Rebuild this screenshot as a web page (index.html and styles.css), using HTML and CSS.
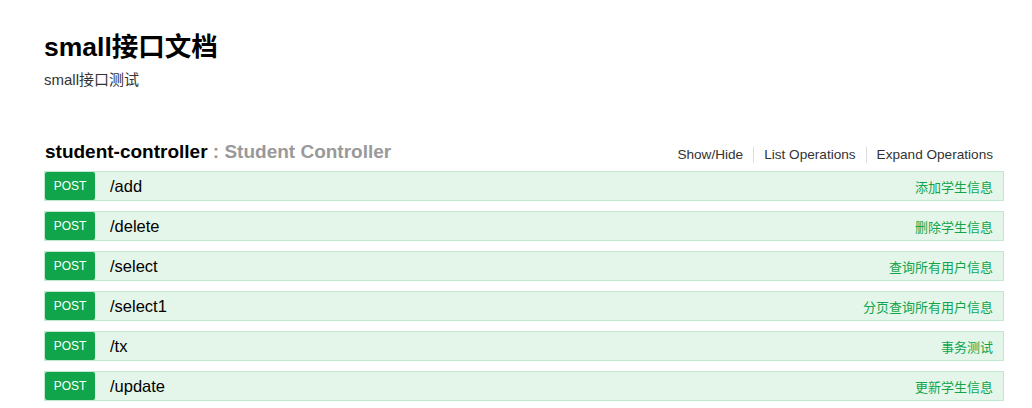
FILE: index.html
```html
<!DOCTYPE html>
<html>
<head>
<meta charset="utf-8">
<link rel="stylesheet" href="styles.css">
</head>
<body>
<div class="page">
  <div class="info">
    <h1 class="title">small接口文档</h1>
    <div class="desc">small接口测试</div>
  </div>
  <div class="resource">
    <div class="heading">
      <h2 class="name">student-controller <span class="sub">: Student Controller</span></h2>
      <ul class="options">
        <li>Show/Hide</li>
        <li>List Operations</li>
        <li>Expand Operations</li>
      </ul>
    </div>
    <ul class="ops">
      <li class="op"><span class="method">POST</span><span class="path">/add</span><span class="summary">添加学生信息</span></li>
      <li class="op"><span class="method">POST</span><span class="path">/delete</span><span class="summary">删除学生信息</span></li>
      <li class="op"><span class="method">POST</span><span class="path">/select</span><span class="summary">查询所有用户信息</span></li>
      <li class="op"><span class="method">POST</span><span class="path">/select1</span><span class="summary">分页查询所有用户信息</span></li>
      <li class="op"><span class="method">POST</span><span class="path">/tx</span><span class="summary">事务测试</span></li>
      <li class="op"><span class="method">POST</span><span class="path">/update</span><span class="summary">更新学生信息</span></li>
    </ul>
  </div>
</div>
</body>
</html>
```

FILE: styles.css
```css
html, body {
  margin: 0;
  padding: 0;
  background: #fff;
}
body {
  font-family: "Liberation Sans", "Noto Sans CJK SC", sans-serif;
  color: #000;
}
.page {
  padding: 30px 28px 0 44px;
}
.title {
  margin: 0;
  font-size: 26.5px;
  font-weight: bold;
  line-height: 34px;
}
.desc {
  margin-top: 6px;
  font-size: 15px;
  line-height: 20px;
  color: #333;
}
.resource {
  margin-top: 48px;
}
.heading {
  display: flex;
  align-items: center;
  justify-content: space-between;
  height: 28px;
  margin-bottom: 5px;
}
.name {
  margin: 0;
  font-size: 19px;
  font-weight: bold;
  line-height: 24px;
  padding-left: 1px;
}
.sub {
  color: #999;
}
.options {
  list-style: none;
  margin: 6px 0 0 0;
  padding: 0 11px 0 0;
  display: flex;
  font-size: 13.6px;
  color: #333;
}
.options li {
  padding: 0 10px;
  border-left: 1px solid #ddd;
  line-height: 16px;
}
.options li:first-child {
  border-left: none;
}
.options li:last-child {
  padding-right: 0;
}
.ops {
  list-style: none;
  margin: 0;
  padding: 0;
}
.op {
  display: flex;
  align-items: center;
  height: 28px;
  background: #e4f6ea;
  border: 1px solid #c3e8d1;
  margin-bottom: 10px;
}
.method {
  width: 50px;
  height: 28px;
  background: #10a54a;
  color: #fff;
  font-size: 12px;
  display: flex;
  align-items: center;
  justify-content: center;
  border-radius: 2px;
}
.path {
  margin-left: 15px;
  font-size: 16.5px;
  flex: 1;
}
.summary {
  font-size: 13px;
  color: #10a54a;
  padding-right: 10px;
}
```
